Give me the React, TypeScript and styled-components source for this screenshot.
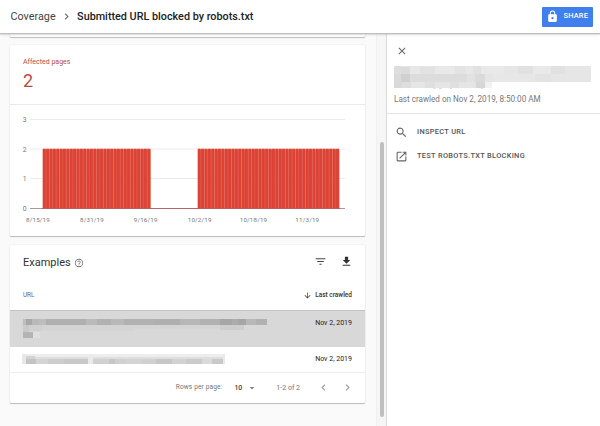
import React from "react";
import styled, { createGlobalStyle } from "styled-components";

const GlobalStyle = createGlobalStyle`
  * { box-sizing: border-box; }
  body { margin: 0; background: #fafafa; font-family: Roboto, "Liberation Sans", sans-serif; color: #3c3c3c; }
`;

const Page = styled.div`
  width: 600px;
  height: 426px;
  display: flex;
  flex-direction: column;
  overflow: hidden;
`;

const Header = styled.header`
  height: 33px;
  flex: none;
  display: flex;
  align-items: center;
  padding: 0 7px 0 10.5px;
  background: #fff;
  box-shadow: 0 1px 1px #bdbdbd, 0 2px 2px rgba(0, 0, 0, 0.12);
  z-index: 1;
`;

const Text = styled.span<{ $size: number; $color?: string; $weight?: number; $spacing?: number }>`
  font-size: ${(p) => p.$size}px;
  line-height: 1.2;
  color: ${(p) => p.$color ?? "#444"};
  font-weight: ${(p) => p.$weight ?? 400};
  letter-spacing: ${(p) => p.$spacing ?? 0}px;
  white-space: nowrap;
`;

const Icon = styled.svg<{ $size: number; $color?: string }>`
  display: block;
  flex: none;
  width: ${(p) => p.$size}px;
  height: ${(p) => p.$size}px;
  fill: ${(p) => p.$color ?? "#666"};
`;

const Crumbs = styled.div`
  display: flex;
  align-items: center;
  flex: 1;
  padding-top: 1px;
`;

const CrumbArrow = styled(Icon)`
  margin: -1px 4px 0 4.5px;
`;

const ShareButton = styled.button`
  width: 51px;
  height: 20px;
  margin: 0;
  padding: 0 0 0 4px;
  border: 0;
  border-radius: 1px;
  display: flex;
  align-items: center;
  gap: 4.5px;
  background: #4080ee;
  font-family: inherit;
`;

const Body = styled.div`
  flex: 1;
  display: flex;
  min-height: 0;
`;

const Main = styled.main`
  width: 376px;
  padding: 0 11px 0 10px;
  display: flex;
  flex-direction: column;
  overflow: hidden;
`;

const Card = styled.section<{ $height: number; $gap?: number }>`
  flex: none;
  height: ${(p) => p.$height}px;
  margin-bottom: ${(p) => p.$gap ?? 0}px;
  background: #fff;
  border-radius: 1px;
  box-shadow: 0 0 1px rgba(0, 0, 0, 0.22), 0 1px 1px rgba(0, 0, 0, 0.24);
`;

const Summary = styled.div`
  height: 60px;
  padding: 13px 13px 0;
  display: flex;
  flex-direction: column;
  border-bottom: 1px solid #e9e9e9;
`;

const Count = styled(Text)`
  margin-top: 4px;
`;

const Plot = styled.svg`
  display: block;
  font-family: inherit;
`;

const ExamplesHead = styled.div`
  height: 35px;
  padding: 0 12px 0 13px;
  display: flex;
  align-items: center;
  gap: 3px;
`;

const HeadActions = styled.div`
  display: flex;
  gap: 13px;
  margin-left: auto;
  margin-top: -3px;
`;

const Columns = styled.div`
  height: 31px;
  padding: 1px 13px 0 13px;
  display: flex;
  align-items: center;
  justify-content: space-between;
  border-bottom: 1px solid #c4c4c4;
`;

const SortLabel = styled.div`
  display: flex;
  align-items: center;
  gap: 3px;
`;

const Row = styled.div<{ $height: number; $selected?: boolean }>`
  height: ${(p) => p.$height}px;
  padding: 6px 13px 0 12px;
  display: flex;
  justify-content: space-between;
  background: ${(p) => (p.$selected ? "#d8d8d8" : "#fff")};
  border-bottom: 1px solid ${(p) => (p.$selected ? "#d8d8d8" : "#eee")};
`;

const DateText = styled(Text)`
  margin-top: 2px;
`;

const Pager = styled.div`
  height: 30px;
  display: flex;
  align-items: center;
  justify-content: flex-end;
  padding-right: 11px;
`;

const PageSize = styled.div`
  display: flex;
  align-items: center;
  gap: 4px;
  margin: 0 18px 0 12px;
`;

const PageArrows = styled.div`
  display: flex;
  gap: 11px;
  margin: -1px 0 0 17px;
`;

const ScrollTrack = styled.div`
  width: 10px;
  flex: none;
  padding: 109px 1px 0 3px;
  background: #f6f6f6;
  border-left: 1px solid #f0f0f0;
`;

const ScrollThumb = styled.div`
  width: 4px;
  height: 275px;
  border-radius: 2px;
  background: #bfbfbf;
`;

const Panel = styled.aside`
  flex: 1;
  background: #fff;
  border-left: 1px solid #dcdcdc;
`;

const PanelTop = styled.div`
  height: 81px;
  padding: 11.5px 7px 0 7px;
  border-bottom: 1px solid #e4e4e4;
`;

const CloseIcon = styled(Icon)`
  margin: 0 0 9.5px 1.5px;
`;

const Mosaic = styled.svg`
  display: block;
  flex: none;
`;

const Crawled = styled(Text)`
  display: block;
  margin-top: 6px;
`;

const Actions = styled.div`
  padding-top: 6px;
`;

const Action = styled.div`
  height: 24px;
  padding-left: 8px;
  display: flex;
  align-items: center;
  gap: 9px;
`;

const DAY = 3.372;
const bars = [
  ...Array.from({ length: 32 }, (_, i) => 32.8 + i * DAY),
  ...Array.from({ length: 42 }, (_, i) => 187.8 + i * DAY),
];
const gridLines = [
  { label: "3", y: 14.5 },
  { label: "2", y: 44 },
  { label: "1", y: 73.5 },
  { label: "0", y: 103.5 },
];
const dates = [
  { label: "8/15/19", x: 28 },
  { label: "8/31/19", x: 82 },
  { label: "9/16/19", x: 135.7 },
  { label: "10/2/19", x: 189.7 },
  { label: "10/18/19", x: 243.5 },
  { label: "11/3/19", x: 297.3 },
];

function Chart() {
  return (
    <Plot width="355" height="131">
      {gridLines.map((g) => (
        <React.Fragment key={g.label}>
          <line x1="20" x2="335" y1={g.y} y2={g.y} stroke={g.label === "0" ? "#a99" : "#ececec"} strokeWidth="1" />
          <text x="12.8" y={g.y + 2.5} fontSize="6.8" fill="#777">{g.label}</text>
        </React.Fragment>
      ))}
      {bars.map((x, i) => (
        <g key={i}>
          <rect x={x} y="44.3" width={DAY} height="59.2" fill="#e5604f" />
          <rect x={x} y="43.7" width="2.8" height="59.8" fill="#db4336" />
        </g>
      ))}
      <line x1="32" x2="330" y1="103.5" y2="103.5" stroke="#b75b60" strokeWidth="0.8" />
      {dates.map((d) => (
        <text key={d.label} x={d.x} y="117.3" fontSize="6.2" letterSpacing="0.2" textAnchor="middle" fill="#777">{d.label}</text>
      ))}
    </Plot>
  );
}

type Cell = [number, number, number, number, string];

const selectedCells: Cell[] = [
  [1, 2, 244, 6, "#b5b5b5"], [1, 2, 3, 6, "#bebebe"], [4, 2, 6, 6, "#a8a8a8"],
  [10, 2, 7, 6, "#b9b9b9"], [17, 2, 7, 6, "#bdbdbd"], [24, 2, 40, 6, "#b0b0b0"],
  [64, 2, 11, 6, "#bababa"], [75, 2, 14, 6, "#b1b1b1"], [89, 2, 13, 6, "#b9b9b9"],
  [102, 2, 30, 6, "#b1b1b1"], [132, 2, 26, 6, "#afafaf"], [158, 2, 20, 6, "#b7b7b7"],
  [178, 2, 20, 6, "#b1b1b1"], [198, 2, 12, 6, "#a6a6a6"], [210, 2, 6, 6, "#acacac"],
  [216, 2, 8, 6, "#a6a6a6"], [224, 2, 10, 6, "#b8b8b8"], [234, 2, 11, 6, "#b1b1b1"],
  [1, 8, 6, 7, "#c9c9c9"], [7, 8, 13, 6, "#d0d0d0"], [20, 8, 92, 6, "#d4d4d4"],
  [112, 8, 86, 4, "#d4d4d4"], [198, 8, 24, 5, "#cdcdcd"],
  [1, 15, 10, 6, "#b4b4b4"], [11, 15, 7, 6, "#dfdfdf"],
];

const secondCells: Cell[] = [
  [0, 1, 203, 10, "#dedede"], [0, 1, 203, 3, "#ededed"], [0, 1, 4, 10, "#e8e8e8"],
  [4, 3, 9, 3, "#d3d3d3"], [4, 6, 10, 5, "#c3c3c3"], [14, 6, 12, 5, "#d4d4d4"],
  [26, 6, 16, 5, "#cdcdcd"], [42, 6, 24, 5, "#c8c8c8"], [66, 1, 5, 10, "#eaeaea"],
  [71, 6, 16, 5, "#d1d1d1"], [87, 6, 6, 5, "#c6c6c6"], [93, 6, 10, 5, "#d0d0d0"],
  [103, 6, 17, 5, "#d4d4d4"], [120, 6, 14, 5, "#d0d0d0"], [134, 6, 16, 5, "#c7c7c7"],
  [150, 6, 14, 5, "#d2d2d2"], [164, 6, 16, 5, "#cbcbcb"], [180, 6, 10, 5, "#dadada"],
  [190, 6, 11, 5, "#c9c9c9"], [201, 1, 2, 10, "#e9e9e9"],
];

const panelCells: Cell[] = [
  [0, 0, 197, 16, "#e6e6e6"], [0, 16, 92, 6, "#e5e5e5"], [0, 0, 7, 8, "#dedede"],
  [7, 1, 9, 7, "#dbdbdb"], [16, 1, 10, 7, "#e8e8e8"], [26, 1, 15, 7, "#e2e2e2"],
  [41, 1, 20, 7, "#e9e9e9"], [61, 0, 10, 8, "#e3e3e3"], [71, 0, 8, 8, "#e7e7e7"],
  [79, 0, 8, 8, "#e1e1e1"], [87, 0, 23, 8, "#e9e9e9"], [110, 0, 14, 8, "#e6e6e6"],
  [124, 0, 15, 8, "#e1e1e1"], [139, 0, 18, 8, "#e9e9e9"], [157, 0, 14, 8, "#e1e1e1"],
  [171, 0, 12, 8, "#e6e6e6"], [0, 8, 7, 8, "#dadada"], [7, 8, 9, 8, "#d0d0d0"],
  [16, 8, 57, 8, "#dcdcdc"], [73, 8, 8, 8, "#e2e2e2"], [81, 8, 10, 8, "#dadada"],
  [91, 8, 8, 8, "#e5e5e5"], [99, 8, 42, 8, "#e7e7e7"], [141, 8, 16, 8, "#e3e3e3"],
  [0, 16, 8, 6, "#d9d9d9"], [8, 16, 9, 6, "#dedede"], [17, 16, 14, 6, "#e6e6e6"],
  [31, 16, 10, 6, "#dfdfdf"], [56, 16, 9, 6, "#dfdfdf"], [82, 16, 9, 6, "#d6d6d6"],
  [91, 16, 7, 6, "#f1f1f1"], [39, 22, 3, 1, "#e2e2e2"], [45, 22, 3, 1, "#dcdcdc"],
  [56, 22, 2, 1, "#dcdcdc"], [87, 22, 2, 1, "#e0e0e0"],
];

function Redacted({ cells, width, height }: { cells: Cell[]; width: number; height: number }) {
  return (
    <Mosaic width={width} height={height} shapeRendering="crispEdges">
      {cells.map(([x, y, w, h, fill], i) => (
        <rect key={i} x={x} y={y} width={w} height={h} fill={fill} />
      ))}
    </Mosaic>
  );
}

export default function App() {
  return (
    <>
      <GlobalStyle />
      <Page>
        <Header>
          <Crumbs>
            <Text $size={10.8} $color="#444">Coverage</Text>
            <CrumbArrow $size={13} viewBox="0 0 24 24"><path d="M10 6 8.6 7.4 13.2 12l-4.6 4.6L10 18l6-6z" /></CrumbArrow>
            <Text $size={10.8} $color="#222" $weight={500}>Submitted URL blocked by robots.txt</Text>
          </Crumbs>
          <ShareButton>
            <Icon $size={13} $color="#fff" viewBox="0 0 24 24"><path d="M18 8h-1V6A5 5 0 0 0 7 6v2H6a2 2 0 0 0-2 2v10c0 1.1.9 2 2 2h12a2 2 0 0 0 2-2V10a2 2 0 0 0-2-2zm-6 9a2 2 0 1 1 0-4 2 2 0 0 1 0 4zm3.1-9H8.9V6a3.1 3.1 0 0 1 6.2 0z" /></Icon>
            <Text $size={7.4} $color="#fff" $weight={500} $spacing={0.2}>SHARE</Text>
          </ShareButton>
        </Header>
        <Body>
          <Main>
            <Card $height={4} $gap={8} />
            <Card $height={191} $gap={9}>
              <Summary>
                <Text $size={7} $color="#b84b43">Affected pages</Text>
                <Count $size={18} $color="#b84b43">2</Count>
              </Summary>
              <Chart />
            </Card>
            <Card $height={158}>
              <ExamplesHead>
                <Text $size={11} $color="#333">Examples</Text>
                <Icon $size={10} $color="#777" viewBox="0 0 24 24"><path d="M11 18h2v-2h-2zm1-16a10 10 0 1 0 0 20 10 10 0 0 0 0-20zm0 18a8 8 0 1 1 0-16 8 8 0 0 1 0 16zm0-14a4 4 0 0 0-4 4h2a2 2 0 1 1 4 0c0 2-3 1.75-3 5h2c0-2.25 3-2.5 3-5a4 4 0 0 0-4-4z" /></Icon>
                <HeadActions>
                  <Icon $size={13} $color="#444" viewBox="0 0 24 24"><path d="M10 18h4v-2h-4zM3 6v2h18V6zm3 7h12v-2H6z" /></Icon>
                  <Icon $size={13} $color="#333" viewBox="0 0 24 24"><path d="M19 9h-4V3H9v6H5l7 7zM5 18v2h14v-2z" /></Icon>
                </HeadActions>
              </ExamplesHead>
              <Columns>
                <Text $size={6.3} $color="#666">URL</Text>
                <SortLabel>
                  <Icon $size={9} $color="#444" viewBox="0 0 24 24"><path d="m20 12-1.4-1.4L13 16.2V4h-2v12.2l-5.6-5.6L4 12l8 8z" /></Icon>
                  <Text $size={6.5} $color="#333" $weight={500}>Last crawled</Text>
                </SortLabel>
              </Columns>
              <Row $height={36} $selected>
                <Redacted cells={selectedCells} width={246} height={22} />
                <DateText $size={7} $color="#222">Nov 2, 2019</DateText>
              </Row>
              <Row $height={26}>
                <Redacted cells={secondCells} width={204} height={12} />
                <DateText $size={7} $color="#222">Nov 2, 2019</DateText>
              </Row>
              <Pager>
                <Text $size={6.6} $color="#777" $spacing={0.12}>Rows per page:</Text>
                <PageSize>
                  <Text $size={7} $weight={500}>10</Text>
                  <Icon $size={12} $color="#888" viewBox="0 0 24 24"><path d="m7 10 5 5 5-5z" /></Icon>
                </PageSize>
                <Text $size={7} $color="#777">1-2 of 2</Text>
                <PageArrows>
                  <Icon $size={13} $color="#999" viewBox="0 0 24 24"><path d="M15.4 7.4 14 6l-6 6 6 6 1.4-1.4L10.8 12z" /></Icon>
                  <Icon $size={13} $color="#999" viewBox="0 0 24 24"><path d="M10 6 8.6 7.4l4.6 4.6-4.6 4.6L10 18l6-6z" /></Icon>
                </PageArrows>
              </Pager>
            </Card>
          </Main>
          <ScrollTrack><ScrollThumb /></ScrollTrack>
          <Panel>
            <PanelTop>
              <CloseIcon $size={12} viewBox="0 0 24 24"><path d="M19 6.4 17.6 5 12 10.6 6.4 5 5 6.4l5.6 5.6L5 17.6 6.4 19l5.6-5.6 5.6 5.6 1.4-1.4-5.6-5.6z" /></CloseIcon>
              <Redacted cells={panelCells} width={198} height={23} />
              <Crawled $size={8.15} $color="#777">Last crawled on Nov 2, 2019, 8:50:00 AM</Crawled>
            </PanelTop>
            <Actions>
              <Action>
                <Icon $size={13} viewBox="0 0 24 24"><path d="M15.5 14h-.8l-.3-.3a6.5 6.5 0 1 0-.7.7l.3.3v.8l5 5 1.5-1.5zm-6 0a4.5 4.5 0 1 1 0-9 4.5 4.5 0 0 1 0 9z" /></Icon>
                <Text $size={7.4} $color="#555" $weight={500} $spacing={0.32}>INSPECT URL</Text>
              </Action>
              <Action>
                <Icon $size={13} viewBox="0 0 24 24"><path d="M19 19H5V5h7V3H5a2 2 0 0 0-2 2v14c0 1.1.9 2 2 2h14a2 2 0 0 0 2-2v-7h-2zM14 3v2h3.6l-9.8 9.8 1.4 1.4L19 6.4V10h2V3z" /></Icon>
                <Text $size={7.4} $color="#555" $weight={500} $spacing={0.32}>TEST ROBOTS.TXT BLOCKING</Text>
              </Action>
            </Actions>
          </Panel>
        </Body>
      </Page>
    </>
  );
}
